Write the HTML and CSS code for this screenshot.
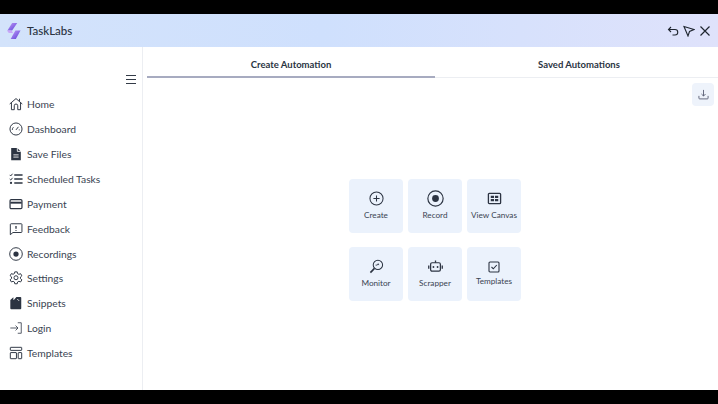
FILE: index.html
```html
<!DOCTYPE html>
<html lang="en">
<head>
<meta charset="utf-8">
<title>TaskLabs</title>
<link rel="stylesheet" href="styles.css">
</head>
<body>
<div class="app">
  <header class="topbar">
    <div class="brand">
      <svg class="logo" viewBox="0 0 16 18"><defs><linearGradient id="lg" x1="0" y1="0" x2="1" y2="1"><stop offset="0" stop-color="#c29cf7"/><stop offset="1" stop-color="#5a3fd8"/></linearGradient></defs><path d="M6.500 0.500h5.500L6.500 8.500H1.500z" fill="url(#lg)"/><path d="M10 8.500h5.500L10.500 17.500H5z" fill="url(#lg)"/><path d="M1 8.500h5l1.500 2.500H3z" fill="#c9a6f7"/></svg>
      <span class="brand-name">TaskLabs</span>
    </div>
    <div class="win">
      <svg class="wi" viewBox="0 0 12 12"><path d="M4 2 1.500 4.500 4 7M1.500 4.500H8a2.500 2.500 0 0 1 0 5.500H5.500"/></svg>
      <svg class="wi" viewBox="0 0 12 12"><path d="M1 1.500 11 4.500 6.500 6.500 5 11z"/></svg>
      <svg class="wi wx" viewBox="0 0 12 12"><path d="M1.500 1.500l9 9M10.500 1.500l-9 9"/></svg>
    </div>
  </header>
  <div class="body">
    <aside class="side">
      <button class="burger"><span></span><span></span><span></span></button>
      <nav class="nav">
        <a class="item"><svg class="ic" viewBox="0 0 16 16"><path d="M.8 8 8 1.800 15.200 8M2.800 6.500V14.500H6V10a2 2 0 0 1 4 0v4.500h3.200V6.500M12 2v2.500"/></svg>Home</a>
        <a class="item"><svg class="ic" viewBox="0 0 16 16"><circle cx="8" cy="8" r="6.900"/><path d="M8 9 10.800 5.500M3.800 9a4.200 4.200 0 0 1 1.200-3M12.200 9h-1"/></svg>Dashboard</a>
        <a class="item"><svg class="ic" viewBox="0 0 16 16"><path class="fill" d="M2.500 1h7L13.500 5v10.200h-11z"/><path class="cut" d="M5 9h6M5 11.500h6"/><path class="cut" d="M9.500 1v4h4"/></svg>Save Files</a>
        <a class="item"><svg class="ic" viewBox="0 0 16 16"><path d="M6 3.500h9.500M6 8h9.500M6 12.500h9.500" stroke-width="1.700"/><path d="M.8 3.300 2 4.500 4 2M.8 8 2 9.200 4 6.700" stroke-width="1.100"/><circle class="fill" cx="2.300" cy="12.500" r="1.300"/></svg>Scheduled Tasks</a>
        <a class="item"><svg class="ic" viewBox="0 0 16 16"><rect x="1.200" y="3" width="13.600" height="10.400" rx="1.300" stroke-width="1.400"/><path d="M1.500 6.500h13" stroke-width="2.200"/></svg>Payment</a>
        <a class="item"><svg class="ic" viewBox="0 0 16 16"><path d="M2.500 2h11.500a.8.800 0 0 1 .8.800v8.400a.8.800 0 0 1-.8.800H4.500L1.500 14.500V3a1 1 0 0 1 1-1z"/><path d="M8 4.500v3.200M8 9v1" stroke-width="1.500"/></svg>Feedback</a>
        <a class="item"><svg class="ic" viewBox="0 0 16 16"><circle cx="8" cy="8" r="7.200"/><circle class="fill" cx="8" cy="8" r="3"/></svg>Recordings</a>
        <a class="item"><svg class="ic" viewBox="0 0 16 16"><path d="M6.600 1h2.800l.4 2 1.500.8 2-.7 1.400 2.400-1.600 1.400v1.800l1.600 1.400-1.400 2.400-2-.7-1.500.8-.4 2H6.600l-.4-2-1.500-.8-2 .7L1.300 10l1.600-1.400V6.800L1.300 5.400l1.400-2.400 2 .7 1.500-.8z"/><circle cx="8" cy="7.700" r="2.300"/></svg>Settings</a>
        <a class="item"><svg class="ic" viewBox="0 0 16 16"><path class="fill" d="M1.500 4.500 5 1.500v3h.5L8.500 1H13a1 1 0 0 1 1 1v12a1 1 0 0 1-1 1H2.500a1 1 0 0 1-1-1z"/><path class="cut" d="M9.500 3.500l2 2" /></svg>Snippets</a>
        <a class="item"><svg class="ic thin" viewBox="0 0 16 16"><path d="M1.500 8h8.500M7.500 5.200 10.300 8l-2.800 2.800M10 2h4v12h-4"/></svg>Login</a>
        <a class="item"><svg class="ic" viewBox="0 0 16 16"><rect x="1.500" y="1.500" width="13" height="3.500" rx=".5"/><rect x="1.500" y="7.500" width="7" height="7" rx=".5"/><rect x="10.500" y="7.500" width="4" height="7" rx=".5"/></svg>Templates</a>
      </nav>
    </aside>
    <main class="main">
      <div class="tabs">
        <div class="tab active">Create Automation</div>
        <div class="tab">Saved Automations</div>
      </div>
      <div class="toolbar">
        <button class="dl"><svg viewBox="0 0 12 12"><path d="M6 1v6.500M3.800 5.500 6 7.700l2.200-2.200M1 7.500V10a.8.800 0 0 0 .8.800h8.400A.8.800 0 0 0 11 10V7.500"/></svg></button>
      </div>
      <div class="stage">
        <div class="grid">
          <div class="card"><svg class="ci" viewBox="0 0 16 16"><circle cx="8" cy="8" r="7"/><path d="M8 4.700v6.600M4.700 8h6.600"/></svg><span>Create</span></div>
          <div class="card"><svg class="ci big" viewBox="0 0 16 16"><circle cx="8" cy="8" r="7.200" stroke-width="1.100"/><circle class="fill" cx="8" cy="8" r="3.200"/></svg><span>Record</span></div>
          <div class="card"><svg class="ci" viewBox="0 0 16 16"><rect x="1.500" y="2.500" width="13" height="11" rx="1" stroke-width="1.400"/><path class="fill" d="M4 5h3.500v2.500H4zM8.500 5H12v2.500H8.500zM4 8.500h3.500V11H4zM8.500 8.500H12V11H8.500z"/></svg><span>View Canvas</span></div>
          <div class="card"><svg class="ci" viewBox="0 0 16 16"><circle cx="9.500" cy="6.300" r="5"/><path d="M5.800 10 1.500 14.500" stroke-width="1.700"/><path d="M7 6.500h1.800l1-1.500 .7 1.500" stroke-width=".9"/></svg><span>Monitor</span></div>
          <div class="card"><svg class="ci" viewBox="0 0 16 16"><rect x="2.800" y="4" width="10.400" height="9" rx="1.500" stroke-width="1.300"/><path d="M8 1.500V4M.8 7v3.500M15.200 7v3.500" stroke-width="1.400"/><circle class="fill" cx="5.800" cy="8.500" r="1"/><circle class="fill" cx="10.200" cy="8.500" r="1"/></svg><span>Scrapper</span></div>
          <div class="card tpl"><svg class="ci small" viewBox="0 0 12 12"><rect x="1" y="1" width="10" height="10" rx="1"/><path d="M3.500 6 5.300 7.800 8.800 4"/></svg><span>Templates</span></div>
        </div>
      </div>
    </main>
  </div>
</div>
</body>
</html>
```

FILE: styles.css
```css
* { box-sizing: border-box; }
html, body { margin: 0; height: 100%; overflow: hidden; background: #000; }
body { padding: 14px 0; font-family: Lato, sans-serif; color: #2b3340; }
.app { height: 376px; background: #fff; display: flex; flex-direction: column; }
.topbar { height: 33px; flex: none; display: flex; align-items: center; justify-content: space-between; padding: 0 7px 0 6px; background: linear-gradient(90deg, #d3e3fb 0%, #cfe0fd 45%, #dfe2fb 100%); }
.brand { display: flex; align-items: center; gap: 6px; }
.logo { width: 15px; height: 18px; }
.brand-name { font-size: 11.500px; color: #2a3442; font-weight: 500; }
.win { display: flex; align-items: center; gap: 4px; }
.wi { width: 12px; height: 12px; fill: none; stroke: #1f2630; stroke-width: 1.100; }
.wx { stroke-width: 1.200; }
.body { flex: 1; display: flex; min-height: 0; }
.side { width: 143px; flex: none; border-right: 1px solid #eceef2; padding-top: 28px; display: flex; flex-direction: column; }
.burger { align-self: flex-end; margin-right: 6px; width: 10px; height: 9px; padding: 0; border: 0; background: none; display: flex; flex-direction: column; justify-content: space-between; }
.burger span { display: block; height: 1px; background: #333b47; }
.nav { margin-top: 7.800px; display: flex; flex-direction: column; }
.item { height: 24.900px; display: flex; align-items: center; gap: 4px; padding-left: 9px; font-size: 10.300px; color: #3a4452; }
.ic { width: 14px; height: 14px; flex: none; fill: none; stroke: #2c3442; stroke-width: 1.100; }
.thin { stroke-width: .9; }
.fill { fill: #2c3442; stroke: none; }
.cut { stroke: #fff; stroke-width: 1; fill: none; }
.main { flex: 1; min-width: 0; padding-left: 4px; display: flex; flex-direction: column; }
.tabs { width: 576px; flex: none; display: flex; margin-top: 2px; height: 29px; }
.tab { flex: 1; display: flex; align-items: center; justify-content: center; font-size: 9.500px; font-weight: 700; color: #2a3442; padding-top: 2px; border-bottom: 1px solid #eceef2; }
.tab.active { border-bottom: 2px solid #a7abc0; padding-top: 3px; }
.toolbar { display: flex; justify-content: flex-end; padding: 5px 4px 0 0; width: 571px; }
.dl { width: 22px; height: 23px; border: 0; border-radius: 4px; background: #eef3fb; padding: 0; display: flex; align-items: center; justify-content: center; }
.dl svg { width: 11px; height: 11px; fill: none; stroke: #4a4f66; stroke-width: .9; }
.stage { width: 576px; display: flex; justify-content: center; padding-top: 73px; }
.grid { display: grid; grid-template-columns: repeat(3, 54px); grid-auto-rows: 54px; column-gap: 5px; row-gap: 14px; }
.card { background: #ebf2fc; border-radius: 4px; display: flex; flex-direction: column; align-items: center; padding-top: 12px; font-size: 8.200px; color: #3a4452; }
.card span { margin-top: 4px; }
.tpl { padding-top: 14px; }
.tpl span { margin-top: 3px; }
.ci { width: 15px; height: 15px; fill: none; stroke: #2c3442; stroke-width: 1.100; }
.ci.big { width: 17px; height: 17px; margin-top: -1px; margin-bottom: -1px; }
.ci.small { width: 12px; height: 12px; }
```
